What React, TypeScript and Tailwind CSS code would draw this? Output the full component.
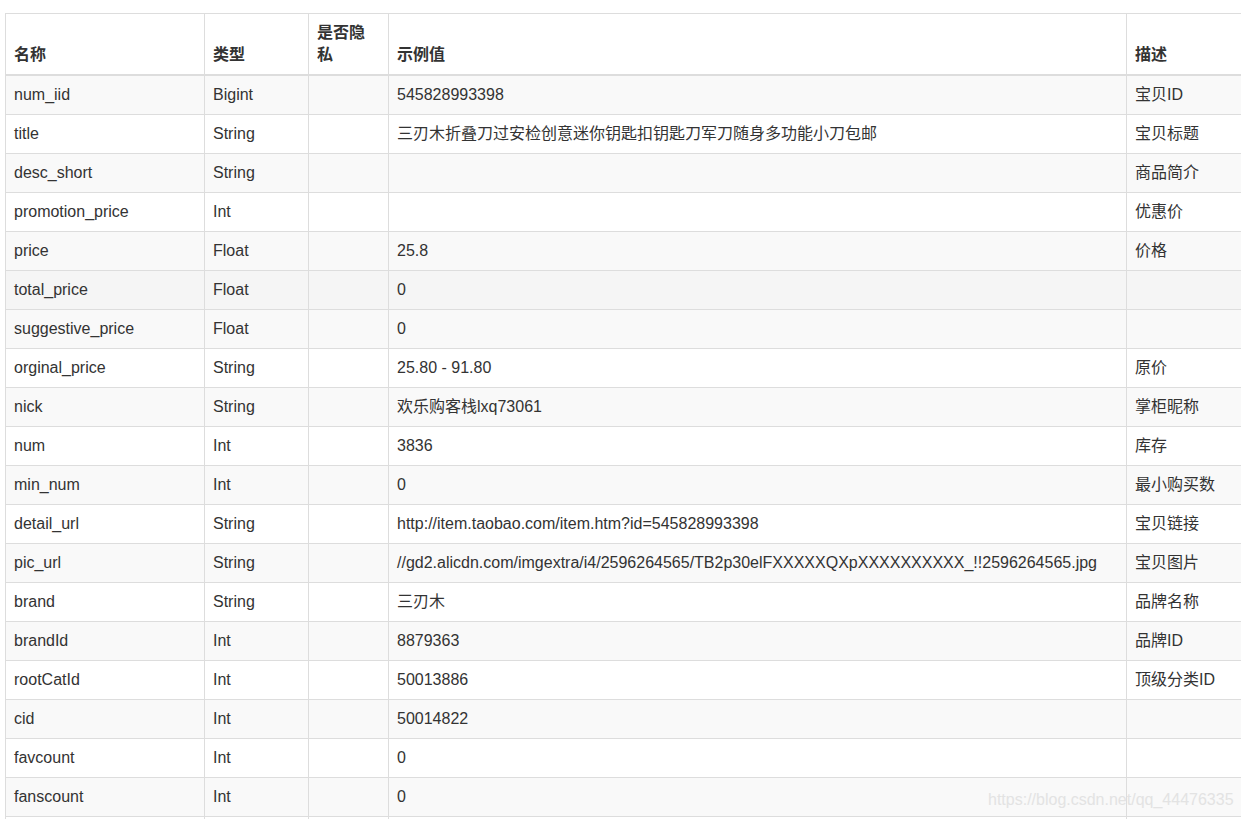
import React from "react";

interface IField {
  name: string;
  type: string;
  example: string;
  desc: string;
}

const FIELDS: IField[] = [
  { name: "num_iid", type: "Bigint", example: "545828993398", desc: "宝贝ID" },
  {
    name: "title",
    type: "String",
    example: "三刃木折叠刀过安检创意迷你钥匙扣钥匙刀军刀随身多功能小刀包邮",
    desc: "宝贝标题",
  },
  { name: "desc_short", type: "String", example: "", desc: "商品简介" },
  { name: "promotion_price", type: "Int", example: "", desc: "优惠价" },
  { name: "price", type: "Float", example: "25.8", desc: "价格" },
  { name: "total_price", type: "Float", example: "0", desc: "" },
  { name: "suggestive_price", type: "Float", example: "0", desc: "" },
  { name: "orginal_price", type: "String", example: "25.80 - 91.80", desc: "原价" },
  { name: "nick", type: "String", example: "欢乐购客栈lxq73061", desc: "掌柜昵称" },
  { name: "num", type: "Int", example: "3836", desc: "库存" },
  { name: "min_num", type: "Int", example: "0", desc: "最小购买数" },
  {
    name: "detail_url",
    type: "String",
    example: "http://item.taobao.com/item.htm?id=545828993398",
    desc: "宝贝链接",
  },
  {
    name: "pic_url",
    type: "String",
    example:
      "//gd2.alicdn.com/imgextra/i4/2596264565/TB2p30elFXXXXXQXpXXXXXXXXXX_!!2596264565.jpg",
    desc: "宝贝图片",
  },
  { name: "brand", type: "String", example: "三刃木", desc: "品牌名称" },
  { name: "brandId", type: "Int", example: "8879363", desc: "品牌ID" },
  { name: "rootCatId", type: "Int", example: "50013886", desc: "顶级分类ID" },
  { name: "cid", type: "Int", example: "50014822", desc: "" },
  { name: "favcount", type: "Int", example: "0", desc: "" },
  { name: "fanscount", type: "Int", example: "0", desc: "" },
  { name: "", type: "", example: "", desc: "" },
];

export default function App() {
  return (
    <div
      className="relative w-[1241px] h-[819px] overflow-hidden bg-white text-[16px] leading-[22px] text-[#333]"
      style={{ fontFamily: '"Liberation Sans", "Noto Sans CJK SC", sans-serif' }}
    >
      <div className="pt-[13px] pl-[5px]">
        <table className="table-fixed border-collapse w-[1334px]">
          <colgroup>
            <col className="w-[199px]" />
            <col className="w-[104px]" />
            <col className="w-[80px]" />
            <col className="w-[738px]" />
            <col className="w-[213px]" />
          </colgroup>
          <thead>
            <tr>
              {["名称", "类型", "是否隐私", "示例值", "描述"].map((h) => (
                <th
                  key={h}
                  className="border border-[#ddd] border-b-2 px-2 py-2 text-left align-bottom font-bold"
                >
                  {h}
                </th>
              ))}
            </tr>
          </thead>
          <tbody>
            {FIELDS.map((f, i) => {
              // fila 6 está en hover
              const bg =
                i === 5 ? "bg-[#f5f5f5]" : i % 2 === 0 ? "bg-[#f9f9f9]" : "bg-white";
              return (
                <tr key={i} className={bg}>
                  <td className="border border-[#ddd] px-2 py-2 h-[39px] whitespace-nowrap">
                    {f.name}
                  </td>
                  <td className="border border-[#ddd] px-2 py-2 whitespace-nowrap">
                    {f.type}
                  </td>
                  <td className="border border-[#ddd] px-2 py-2"></td>
                  <td className="border border-[#ddd] px-2 py-2 whitespace-nowrap overflow-hidden">
                    {f.example}
                  </td>
                  <td className="border border-[#ddd] px-2 py-2 whitespace-nowrap">
                    {f.desc}
                  </td>
                </tr>
              );
            })}
          </tbody>
        </table>
      </div>

      {/* Marca de agua */}
      <div className="absolute left-[988px] top-[789px] text-[16px] leading-[22px] text-[#e3e3e3] whitespace-nowrap pointer-events-none">
        https://blog.csdn.net/qq_44476335
      </div>
    </div>
  );
}
